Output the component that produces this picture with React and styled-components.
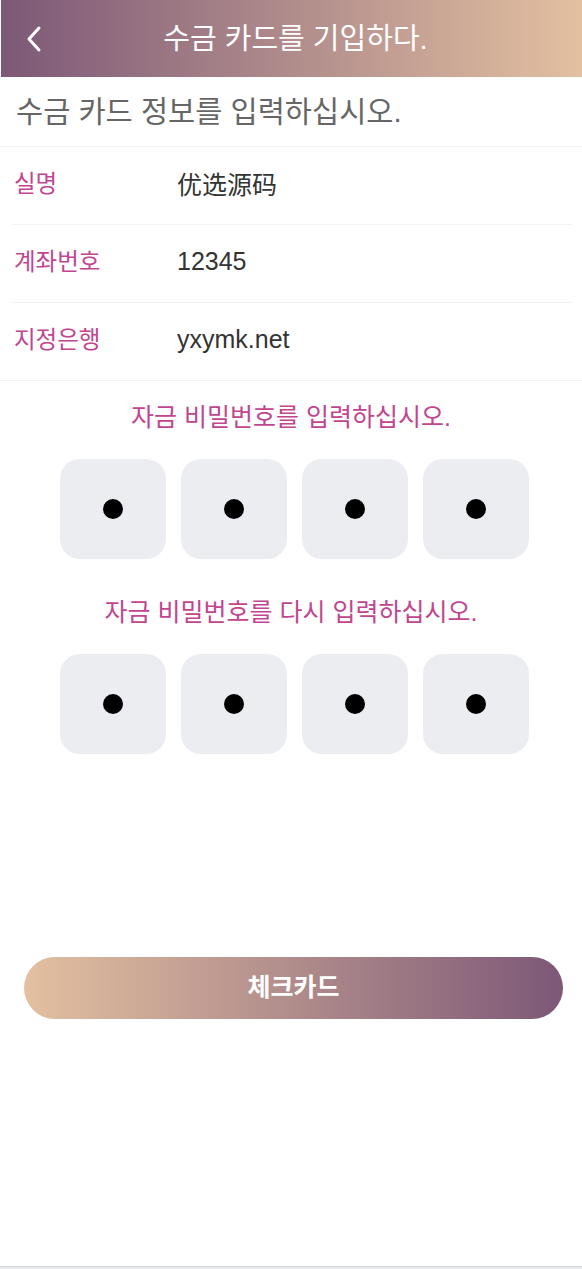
import React from "react";
import styled, { createGlobalStyle } from "styled-components";

const GlobalStyle = createGlobalStyle`
    html, body {
        margin: 0;
        padding: 0;
        background: #fff;
        font-family: "Liberation Sans", "Noto Sans CJK KR", "Noto Sans CJK SC", sans-serif;
    }
`;

const Page = styled.div`
    display: flex;
    flex-direction: column;
    min-height: 100vh;
`;

const Header = styled.header`
    height: 77px;
    margin-left: 1px;
    display: flex;
    align-items: center;
    justify-content: center;
    position: relative;
    background: linear-gradient(90deg, #7d5877 0%, #e3c0a0 100%);
    color: #fff;
`;

const BackButton = styled.button`
    position: absolute;
    left: 20px;
    top: 24px;
    width: 26px;
    height: 30px;
    padding: 0;
    border: none;
    background: transparent;
    display: flex;
    align-items: center;
    justify-content: center;
    cursor: pointer;
`;

const Title = styled.h1`
    margin: 0 0 5px 8px;
    font-size: 29px;
    font-weight: 400;
`;

const SubTitle = styled.div`
    height: 64px;
    padding: 0 0 5px 16px;
    display: flex;
    align-items: center;
    font-size: 29.5px;
    color: #666;
    border-bottom: 1px solid #f2f2f2;
`;

const InfoList = styled.div`
    border-bottom: 1px solid #f2f2f2;
`;

const InfoRow = styled.div`
    height: 72px;
    padding-bottom: 5px;
    margin: 0 10px 0 13px;
    display: flex;
    align-items: center;
    border-bottom: ${(props) => (props.last ? "none" : "1px solid #f2f2f2")};
`;

const Label = styled.span`
    width: 163px;
    padding-left: 1px;
    margin-bottom: 2px;
    font-size: 23.5px;
    color: #c2458f;
`;

const Value = styled.span`
    font-size: 25px;
    color: #333;
`;

const Prompt = styled.p`
    margin: ${(props) => props.top}px 0 0 0;
    text-align: center;
    font-size: 25px;
    line-height: 30px;
    color: #c2458f;
`;

const PinRow = styled.div`
    display: flex;
    justify-content: center;
    gap: 15px;
    padding-left: 7px;
    margin-top: 27px;
`;

const PinBox = styled.div`
    width: 106px;
    height: 100px;
    border-radius: 20px;
    background: #ecedf1;
    display: flex;
    align-items: center;
    justify-content: center;
`;

const Dot = styled.span`
    width: 20px;
    height: 20px;
    border-radius: 50%;
    background: #000;
`;

const SubmitButton = styled.button`
    margin: 203px 19px 0 24px;
    height: 62px;
    padding: 0 0 6px;
    border: none;
    border-radius: 31px;
    background: linear-gradient(90deg, #e3c0a0 0%, #7d5877 100%);
    color: #fff;
    font-family: inherit;
    font-size: 25px;
    font-weight: 700;
    cursor: pointer;
`;

const Footer = styled.div`
    margin-top: auto;
    height: 2px;
    border-top: 1px solid #d6d7da;
    background: #e6e8ed;
`;

const rows = [
    { label: "실명", value: "优选源码" },
    { label: "계좌번호", value: "12345" },
    { label: "지정은행", value: "yxymk.net" },
];

const PinGroup = () => (
    <PinRow>
        {[0, 1, 2, 3].map((i) => (
            <PinBox key={i}>
                <Dot />
            </PinBox>
        ))}
    </PinRow>
);

const App = () => {
    return (
        <Page>
            <GlobalStyle />
            <Header>
                <BackButton>
                    <svg width="18" height="28" viewBox="0 0 18 28" fill="none">
                        <path
                            d="M14 3 L4 14 L14 25"
                            stroke="#fff"
                            strokeWidth="3"
                            strokeLinecap="round"
                            strokeLinejoin="round"
                        />
                    </svg>
                </BackButton>
                <Title>수금 카드를 기입하다.</Title>
            </Header>
            <SubTitle>수금 카드 정보를 입력하십시오.</SubTitle>
            <InfoList>
                {rows.map((item, i) => (
                    <InfoRow key={i} last={i === rows.length - 1}>
                        <Label>{item.label}</Label>
                        <Value>{item.value}</Value>
                    </InfoRow>
                ))}
            </InfoList>
            <Prompt top={21}>자금 비밀번호를 입력하십시오.</Prompt>
            <PinGroup />
            <Prompt top={38}>자금 비밀번호를 다시 입력하십시오.</Prompt>
            <PinGroup />
            <SubmitButton>체크카드</SubmitButton>
            <Footer />
        </Page>
    );
};

export default App;
